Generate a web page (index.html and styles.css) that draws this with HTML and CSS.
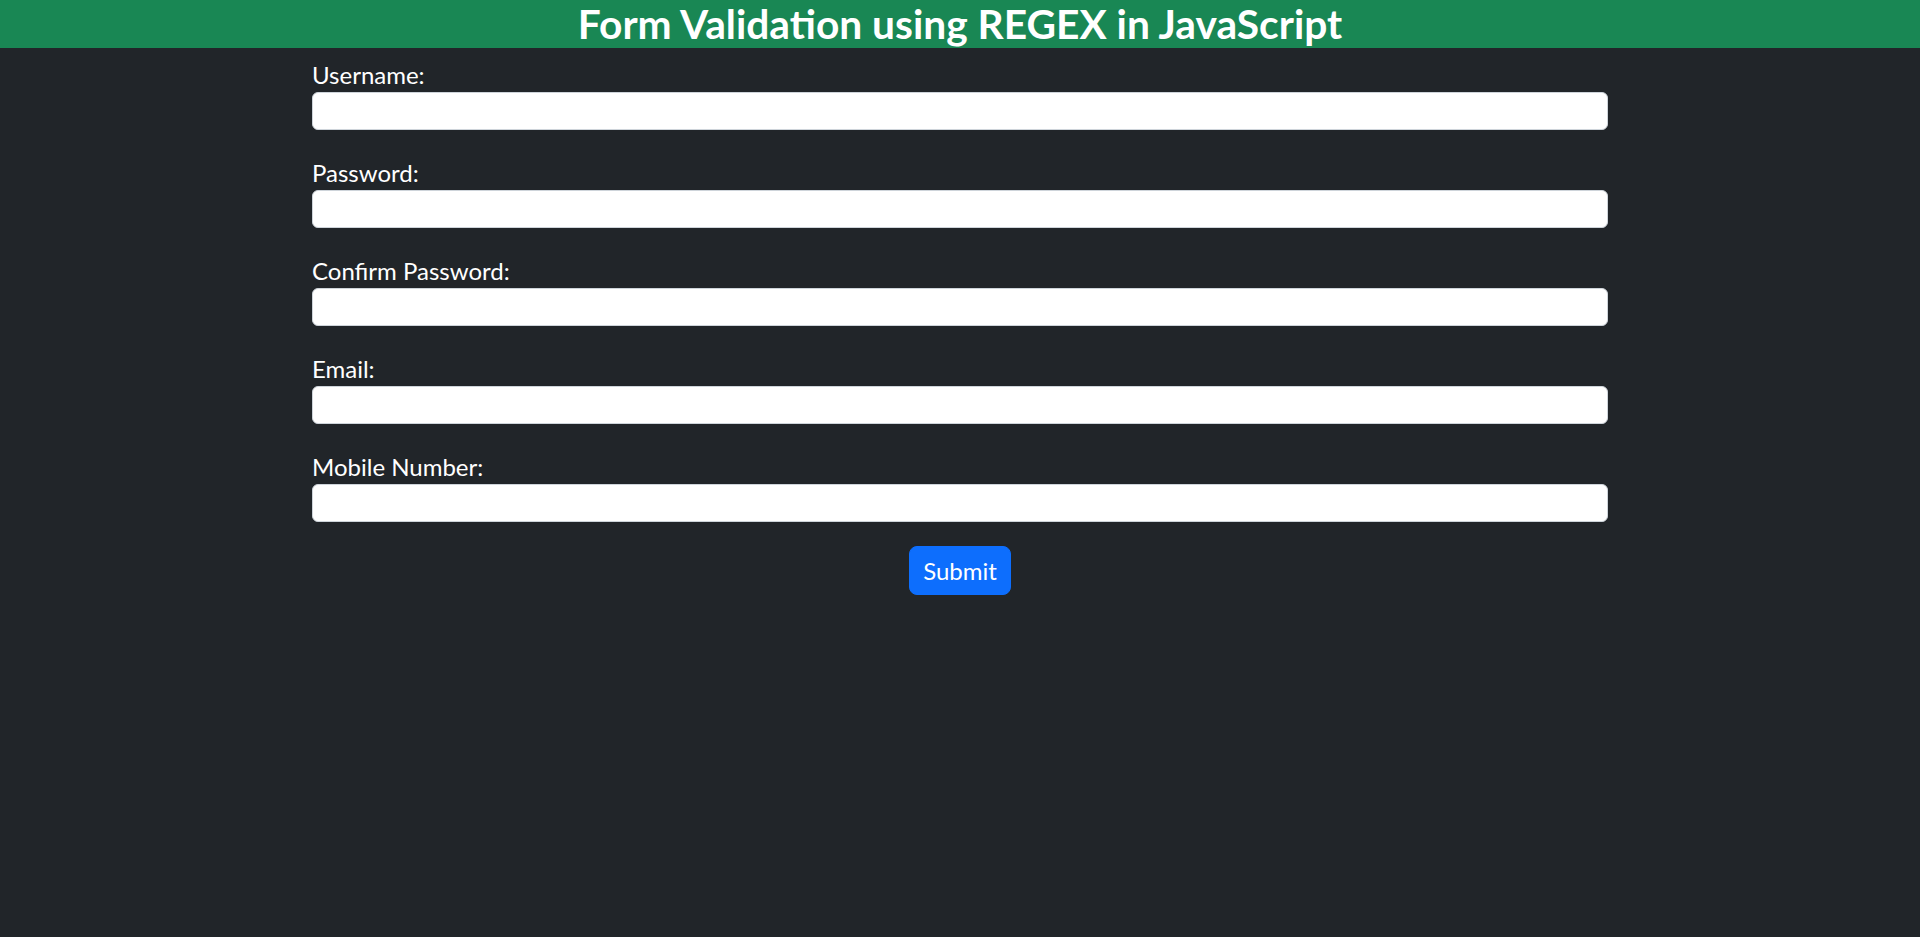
FILE: index.html
```html
<!DOCTYPE html>
<html lang="en">
<head>
<meta charset="utf-8">
<title>Form Validation using REGEX in JavaScript</title>
<link rel="stylesheet" href="styles.css">
</head>
<body>
<header class="site-header">
  <h1 class="site-title">Form Validation using REGEX in JavaScript</h1>
</header>
<main class="container">
  <form class="reg-form" onsubmit="return false;">
    <div class="field">
      <label class="field-label" for="username">Username:</label>
      <input class="field-input" type="text" id="username">
    </div>
    <div class="field">
      <label class="field-label" for="password">Password:</label>
      <input class="field-input" type="password" id="password">
    </div>
    <div class="field">
      <label class="field-label" for="confirm">Confirm Password:</label>
      <input class="field-input" type="password" id="confirm">
    </div>
    <div class="field">
      <label class="field-label" for="email">Email:</label>
      <input class="field-input" type="text" id="email">
    </div>
    <div class="field field-last">
      <label class="field-label" for="mobile">Mobile Number:</label>
      <input class="field-input" type="text" id="mobile">
    </div>
    <div class="actions">
      <button class="submit-btn" type="submit">Submit</button>
    </div>
  </form>
</main>
</body>
</html>
```

FILE: styles.css
```css
html, body {
  margin: 0;
  padding: 0;
}

body {
  background: #212529;
  color: #ffffff;
  font-family: Lato, "Open Sans", "Noto Sans", sans-serif;
  min-height: 937px;
}

.site-header {
  background: #198754;
  height: 48px;
  display: flex;
  align-items: center;
  justify-content: center;
}

.site-title {
  margin: 0;
  font-size: 40.7px;
  font-weight: 700;
  line-height: 48px;
  color: #ffffff;
}

.container {
  width: 1296px;
  margin: 0 auto;
  padding-top: 15px;
}

.reg-form {
  display: flex;
  flex-direction: column;
}

.field {
  display: flex;
  flex-direction: column;
  margin-bottom: 31px;
}

.field-last {
  margin-bottom: 24px;
}

.field-label {
  font-size: 24px;
  line-height: 24px;
  margin-bottom: 5px;
}

.field-input {
  box-sizing: border-box;
  height: 38px;
  width: 100%;
  border: 1px solid #ced4da;
  border-radius: 6px;
  background: #ffffff;
  padding: 6px 12px;
  font-size: 16px;
  outline: none;
}

.actions {
  display: flex;
  justify-content: center;
}

.submit-btn {
  box-sizing: border-box;
  height: 49px;
  padding: 0 13px;
  border: 1px solid #0d6efd;
  border-radius: 8px;
  background: #0d6efd;
  color: #ffffff;
  font-family: Lato, "Open Sans", "Noto Sans", sans-serif;
  font-size: 24px;
  line-height: 30px;
  cursor: pointer;
}
```
